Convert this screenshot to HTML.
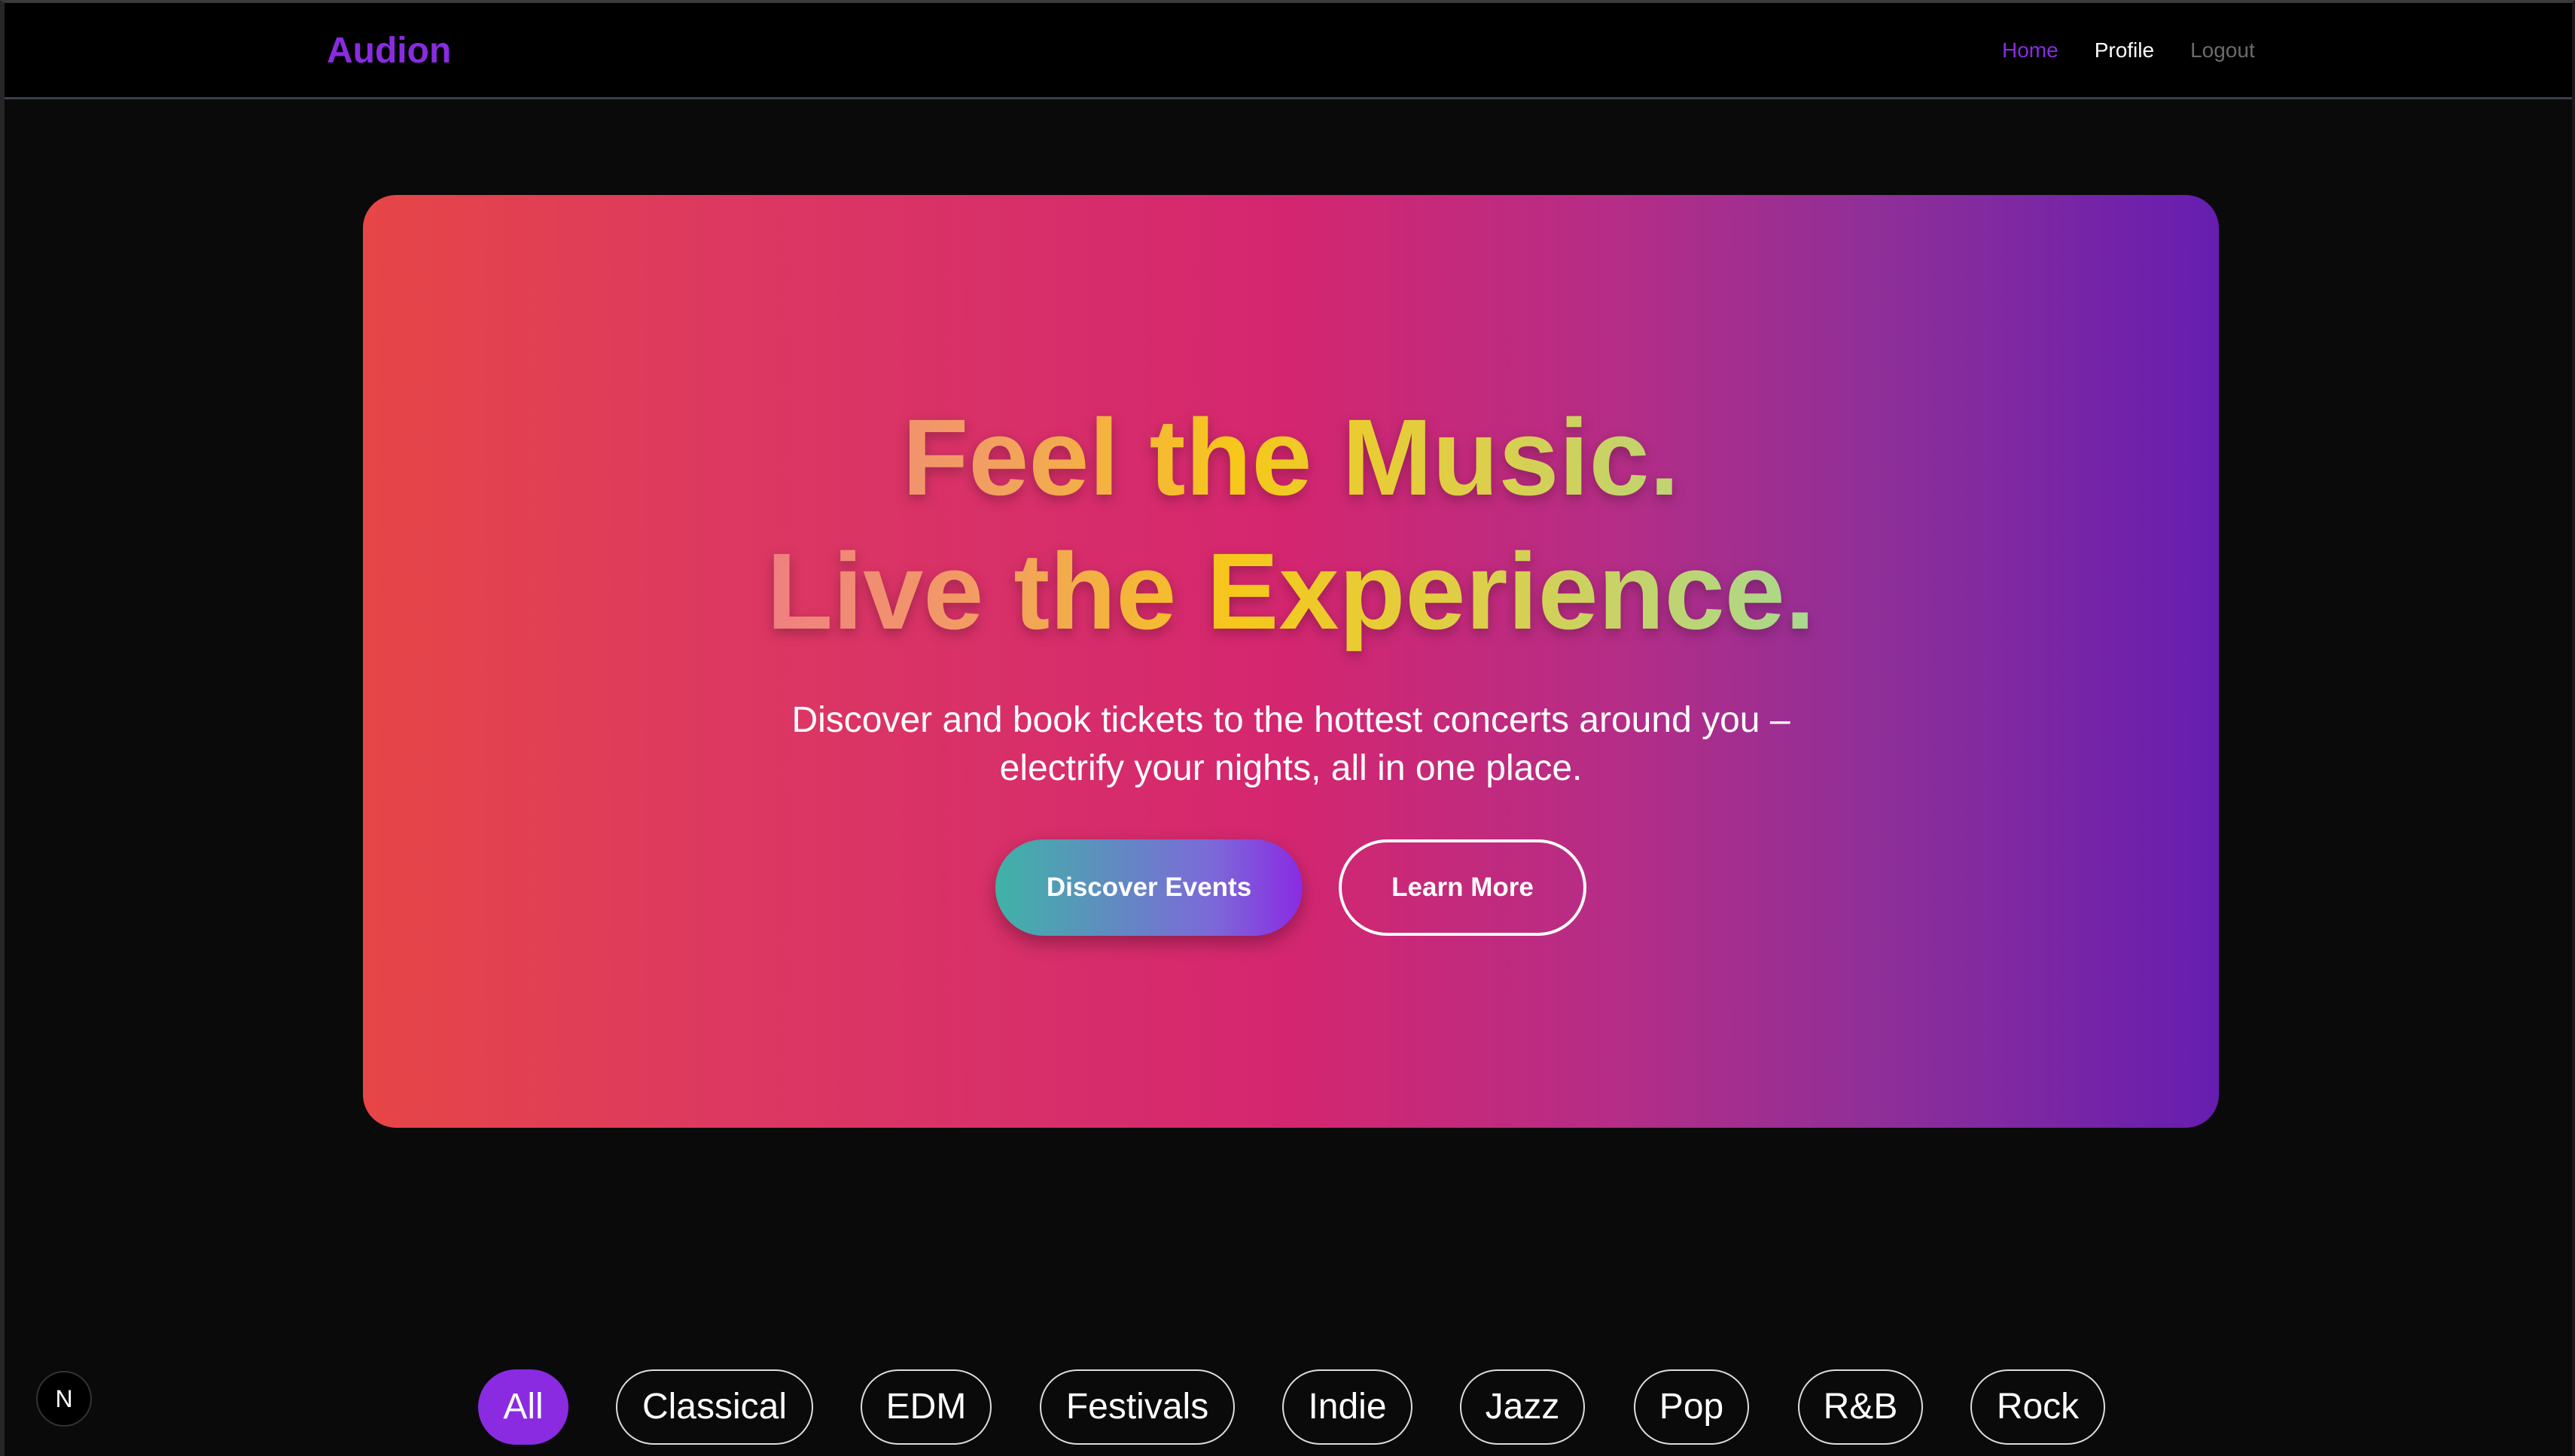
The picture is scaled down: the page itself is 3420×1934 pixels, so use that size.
<!DOCTYPE html>
<html><head><meta charset="utf-8"><style>
*{margin:0;padding:0;box-sizing:border-box}
html,body{width:3420px;height:1934px;overflow:hidden;background:#0a0a0a;font-family:"Liberation Sans",Arial,sans-serif}
.frame{position:absolute;inset:0;border-top:4px solid #3a3a3a;border-left:6px solid #262626;border-right:4px solid #1a1a1a}
nav{position:absolute;left:6px;right:4px;top:4px;height:128px;background:#000;border-bottom:3px solid #3a3f52}
.logo{position:absolute;left:428px;top:36px;font-size:48px;font-weight:bold;color:#8a2be2}
.links{position:absolute;left:2653px;top:47px;font-size:28px}
.links span{margin-right:48px}
.hero{position:absolute;left:482px;top:259px;width:2465px;height:1239px;border-radius:44px;
background:linear-gradient(90deg,#e64646 0%,#dc3862 20%,#d42670 50%,#b42d87 68%,#8e2f99 82%,#661db0 100%);text-align:center}
.t{position:absolute;left:0;right:0;top:260px;text-align:center}
h1{display:inline-block;font-size:144px;line-height:178px;font-weight:bold;
background:linear-gradient(90deg,#ef7f80 0%,#f2a060 22%,#f6c81a 45%,#dccf4a 68%,#a8d890 100%);
-webkit-background-clip:text;background-clip:text;color:transparent;filter:drop-shadow(0 6px 8px rgba(0,0,0,.25))}
.sub{position:absolute;left:0;right:0;top:666px;font-size:48px;line-height:64px;color:#fff}
.btn{position:absolute;top:856px;height:128px;border-radius:64px;font-size:35px;font-weight:bold;color:#fff;line-height:128px;text-align:center}
.b1{left:840px;width:408px;background:linear-gradient(90deg,#3fb3a6,#7c6ad8 70%,#8a2be2);box-shadow:0 10px 24px rgba(0,0,0,.3)}
.b2{left:1296px;width:329px;border:4px solid #fff;line-height:120px}
.pill{position:absolute;top:1819px;height:100px;border:2px solid #ddd;border-radius:50px;color:#fff;font-size:48px;line-height:96px;text-align:center}
.n{position:absolute;left:48px;top:1821px;width:74px;height:74px;border-radius:50%;background:#000;border:2px solid #333;color:#fff;font-size:32px;line-height:70px;text-align:center}
</style></head><body>
<div class="frame"></div>
<nav><div class="logo">Audion</div>
<div class="links"><span style="color:#8a2be2">Home</span><span style="color:#fff">Profile</span><span style="color:#6b6b6b;margin:0">Logout</span></div></nav>
<div class="hero">
<div class="t"><h1>Feel the Music.<br>Live the Experience.</h1></div>
<div class="sub">Discover and book tickets to the hottest concerts around you –<br>electrify your nights, all in one place.</div>
<div class="btn b1">Discover Events</div>
<div class="btn b2">Learn More</div>
</div>
<div class="pill" style="left:635px;width:120px;background:#8a2be2;border-color:#8a2be2">All</div>
<div class="pill" style="left:818px;width:262px">Classical</div>
<div class="pill" style="left:1143px;width:174px">EDM</div>
<div class="pill" style="left:1381px;width:259px">Festivals</div>
<div class="pill" style="left:1703px;width:173px">Indie</div>
<div class="pill" style="left:1939px;width:166px">Jazz</div>
<div class="pill" style="left:2170px;width:153px">Pop</div>
<div class="pill" style="left:2388px;width:166px">R&amp;B</div>
<div class="pill" style="left:2617px;width:179px">Rock</div>
<div class="n">N</div>
</body></html>
